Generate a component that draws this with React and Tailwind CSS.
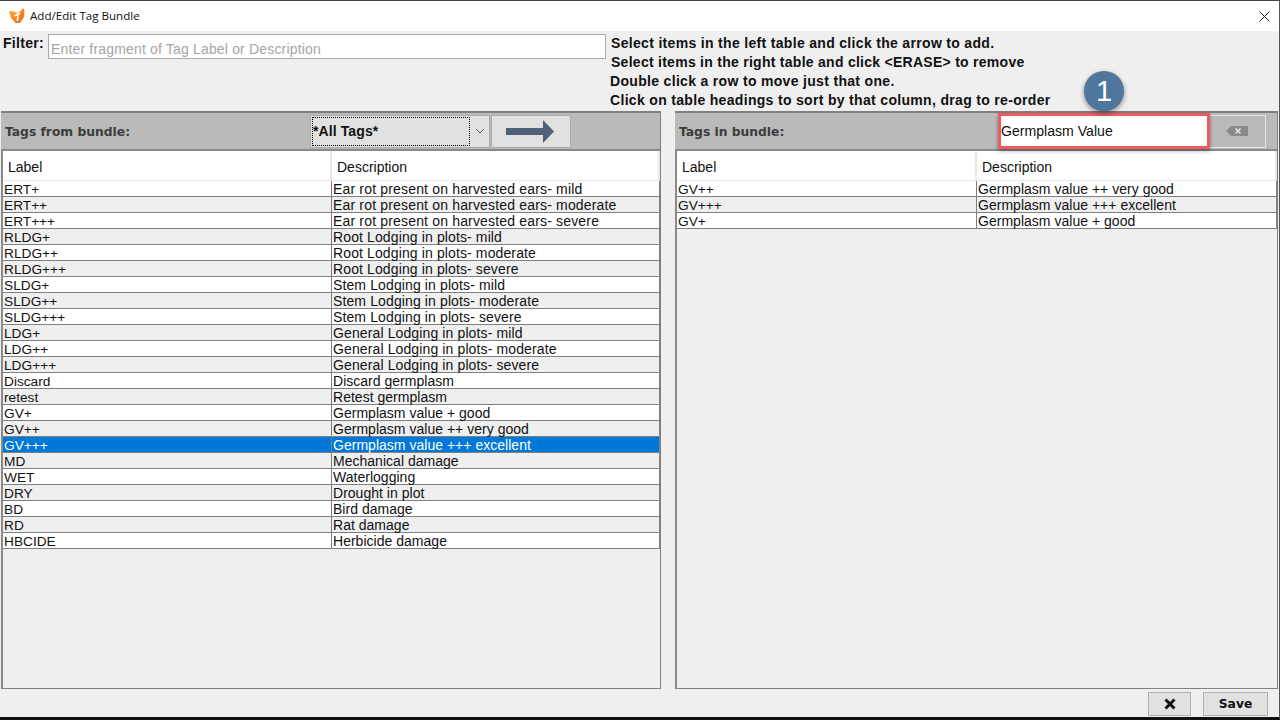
import React from 'react';

const leftRows = [
  ['ERT+', 'Ear rot present on harvested ears- mild'],
  ['ERT++', 'Ear rot present on harvested ears- moderate'],
  ['ERT+++', 'Ear rot present on harvested ears- severe'],
  ['RLDG+', 'Root Lodging in plots- mild'],
  ['RLDG++', 'Root Lodging in plots- moderate'],
  ['RLDG+++', 'Root Lodging in plots- severe'],
  ['SLDG+', 'Stem Lodging in plots- mild'],
  ['SLDG++', 'Stem Lodging in plots- moderate'],
  ['SLDG+++', 'Stem Lodging in plots- severe'],
  ['LDG+', 'General Lodging in plots- mild'],
  ['LDG++', 'General Lodging in plots- moderate'],
  ['LDG+++', 'General Lodging in plots- severe'],
  ['Discard', 'Discard germplasm'],
  ['retest', 'Retest germplasm'],
  ['GV+', 'Germplasm value + good'],
  ['GV++', 'Germplasm value ++ very good'],
  ['GV+++', 'Germplasm value +++ excellent'],
  ['MD', 'Mechanical damage'],
  ['WET', 'Waterlogging'],
  ['DRY', 'Drought in plot'],
  ['BD', 'Bird damage'],
  ['RD', 'Rat damage'],
  ['HBCIDE', 'Herbicide damage'],
];
const rightRows = [
  ['GV++', 'Germplasm value ++ very good'],
  ['GV+++', 'Germplasm value +++ excellent'],
  ['GV+', 'Germplasm value + good'],
];

function spacing(d) {
  if (d.startsWith('Ear')) return 'tracking-[0.17px]';
  if (d.includes('Lodging')) return 'tracking-[0.12px]';
  return 'tracking-[0.02px]';
}

function Table({ rows, labelW, selected }) {
  return (
    <div className="flex-1 flex flex-col min-h-0 bg-[#efefef] border-l-2 border-[#8a8a8a]">
      <div className="flex h-[30px] bg-white text-[14px] text-[#111] border-b border-[#e8e8e8]">
        <div style={{ width: labelW }} className="shrink-0 pl-[5px] pt-[8px] leading-[16px] border-r-2 border-[#e8e8e8]">Label</div>
        <div className="flex-1 pl-[5px] pt-[8px] leading-[16px] border-r-2 border-[#e8e8e8]">Description</div>
      </div>
      {rows.map((r, i) => {
        const sel = i === selected;
        const bg = sel ? 'bg-[#0078d7] text-white' : i % 2 === 0 ? 'bg-white text-[#111]' : 'bg-[#efefef] text-[#111]';
        return (
          <div key={i} className={`flex h-[16px] text-[14px] leading-[17px] border-b border-[#808080] whitespace-nowrap ${bg}`}>
            <div style={{ width: labelW }} className="shrink-0 pl-[1px] text-[13.7px] border-r border-[#808080]">{r[0]}</div>
            <div className={`flex-1 pl-[1px] border-r border-[#808080] ${spacing(r[1])}`}>{r[1]}</div>
          </div>
        );
      })}
    </div>
  );
}

export default function App() {
  return (
    <div className="relative w-[1280px] h-[720px] overflow-hidden bg-[#efefef] flex flex-col font-['Liberation_Sans',sans-serif] border-t border-[#444] border-b-[3px] border-b-[#111] border-r border-r-[#555]">
      <div className="h-[30px] shrink-0 bg-white flex items-center pl-[9px] pr-[9px]">
        <svg width="16" height="16" viewBox="0 0 16 16">
          <defs>
            <linearGradient id="lg" x1="0" y1="0" x2="1" y2="1">
              <stop offset="0" stopColor="#fbb62f" />
              <stop offset="1" stopColor="#ef5f17" />
            </linearGradient>
          </defs>
          <path d="M0 3 L5 3.5 L8 5 L11.5 3 L14 0 L15.5 2.5 L15 9 L11 15 L6.5 15 L2 10 Z" fill="url(#lg)" />
          <path d="M5.5 8 L11 5 M9 6 L8.5 13" stroke="#fff" strokeWidth="1.6" fill="none" />
        </svg>
        <span className="ml-[5px] text-[11.6px] text-[#111] font-['Open_Sans',sans-serif]">Add/Edit Tag Bundle</span>
        <svg className="ml-auto" width="11" height="11" viewBox="0 0 11 11">
          <path d="M0.5 0.5 L10.5 10.5 M10.5 0.5 L0.5 10.5" stroke="#222" strokeWidth="1" />
        </svg>
      </div>

      <div className="h-[80px] shrink-0 flex pl-[3px]">
        <span className="mt-[4px] text-[14px] leading-[16px] font-bold text-[#111] tracking-[0.3px] w-[45px] shrink-0">Filter:</span>
        <div className="mt-[3px] w-[558px] h-[25px] shrink-0 bg-white border border-[#a9a9a9] pl-[2px] text-[14px] leading-[29px] text-[#a5a5a5] tracking-[0.17px]">
          Enter fragment of Tag Label or Description
        </div>
        <div className="ml-[4px] pt-[3px] text-[14px] leading-[19px] font-bold text-[#111] whitespace-nowrap tracking-[0.32px]">
          <div className="pl-[1px]">Select items in the left table and click the arrow to add.</div>
          <div className="pl-[1px] tracking-[0.27px]">Select items in the right table and click &lt;ERASE&gt; to remove</div>
          <div>Double click a row to move just that one.</div>
          <div>Click on table headings to sort by that column, drag to re-order</div>
        </div>
      </div>

      <div className="flex-1 flex min-h-0 pl-[1px] pr-[1px] pb-[28px] gap-[14px]">
        <section className="w-[660px] shrink-0 flex flex-col border-t-2 border-r border-b border-[#808080]">
          <div className="h-[38px] shrink-0 bg-[#bababa] flex items-center pl-[4px] border-b-2 border-[#8a8a8a]">
            <span className="w-[305px] shrink-0 pt-[2px] text-[12.3px] font-bold text-[#3c3c3c] font-['DejaVu_Sans',sans-serif]">Tags from bundle:</span>
            <div className="w-[180px] h-[33px] shrink-0 flex bg-[#e1e1e1] border border-[#aaa] items-stretch">
              <div className="m-[1px] w-[158px] border border-dotted border-black text-[14px] font-bold text-[#111] leading-[26px] tracking-[0.1px]">*All Tags*</div>
              <div className="flex-1 flex items-center justify-center">
                <svg width="10" height="6" viewBox="0 0 10 6"><path d="M1 1 L5 5 L9 1" fill="none" stroke="#666" strokeWidth="1" /></svg>
              </div>
            </div>
            <div className="ml-px w-[80px] h-[33px] shrink-0 bg-[#e1e1e1] border border-[#aaa] flex items-center justify-center pr-[2px]">
              <svg width="48" height="23" viewBox="0 0 48 23"><path d="M0 8 H37 V0 L48 11.5 L37 23 V15 H0 Z" fill="#4f6079" /></svg>
            </div>
          </div>
          <Table rows={leftRows} labelW={329} selected={16} />
        </section>

        <section className="flex-1 flex flex-col border-t-2 border-r border-b border-[#808080]">
          <div className="h-[38px] shrink-0 bg-[#bababa] flex items-center pl-[4px] border-b-2 border-[#8a8a8a]">
            <span className="w-[320px] shrink-0 pt-[2px] text-[12.3px] font-bold text-[#3c3c3c] font-['DejaVu_Sans',sans-serif]">Tags in bundle:</span>
            <div className="w-[210px] h-[32px] shrink-0 bg-white pl-[2px] text-[14.1px] leading-[32px] text-[#111]">Germplasm Value</div>
            <div className="ml-[-1px] w-[58px] h-[33px] shrink-0 bg-[#bababa] border border-[#e4e4e4] flex items-center justify-center">
              <svg width="22" height="10" viewBox="0 0 22 10">
                <path d="M0 5 L5 0 H22 V10 H5 Z" fill="#8a8a8a" />
                <path d="M9.5 2.5 L14.5 7.5 M14.5 2.5 L9.5 7.5" stroke="#e6e6e6" strokeWidth="1.5" />
              </svg>
            </div>
          </div>
          <Table rows={rightRows} labelW={300} selected={-1} />
        </section>
      </div>

      <div className="absolute left-0 right-0 bottom-0 h-[26px] flex justify-end items-center pr-[11px] gap-[12px]">
        <div className="w-[43px] h-[24px] bg-[#e1e1e1] border border-[#b0b0b0] flex items-center justify-center">
          <svg width="12" height="12" viewBox="0 0 12 12"><path d="M1.5 1.5 L10.5 10.5 M10.5 1.5 L1.5 10.5" stroke="#111" strokeWidth="3" /></svg>
        </div>
        <div className="w-[65px] h-[24px] bg-[#e1e1e1] border border-[#b0b0b0] flex items-center justify-center text-[12.3px] font-bold text-[#111] font-['DejaVu_Sans',sans-serif]">Save</div>
      </div>

      <div className="absolute left-[998px] top-[112px] w-[212px] h-[36px] border-[3px] border-[#ee5a5f] shadow-[0_2px_4px_rgba(0,0,0,0.35)]" />
      <div className="absolute left-[1084px] top-[70px] w-[40px] h-[40px] rounded-full bg-[#4f769c] text-white text-[29px] leading-[40px] text-center shadow-[0_2px_5px_rgba(0,0,0,0.45)]">1</div>
    </div>
  );
}
